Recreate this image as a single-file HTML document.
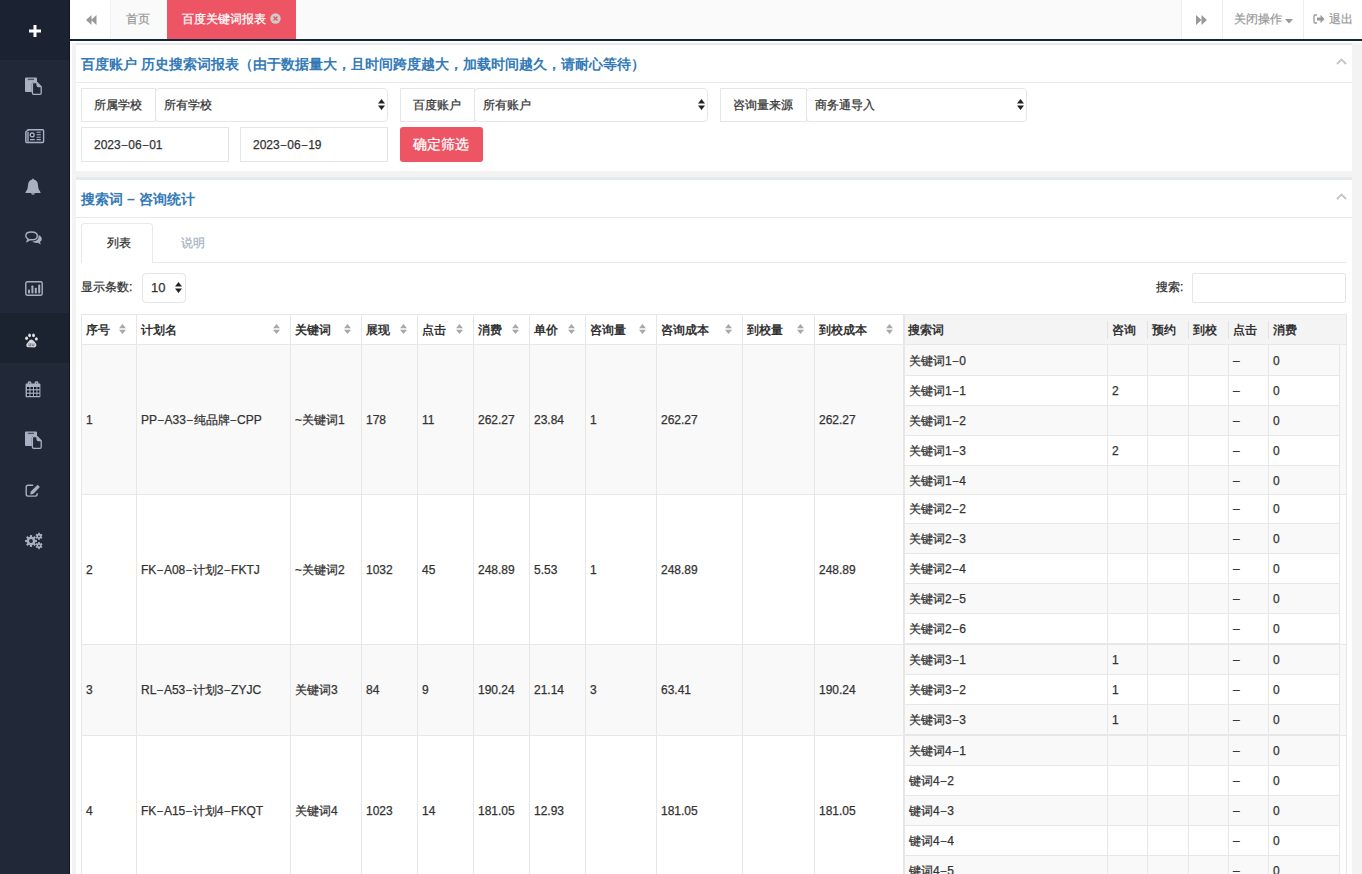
<!DOCTYPE html><html><head><meta charset="utf-8"><style>
*{box-sizing:border-box;margin:0;padding:0}
html,body{width:1362px;height:874px;overflow:hidden;background:#f3f3f4;font-family:"Liberation Sans",sans-serif;font-size:12px;color:#333}
.t{-webkit-text-stroke:0.25px currentColor}
.A{position:absolute}
.t{position:absolute;white-space:nowrap;line-height:14px}
#side{position:absolute;left:0;top:0;width:70px;height:874px;background:#212938;border-right:1px solid #101727}
#logo{position:absolute;left:0;top:0;width:69px;height:60px;background:#1b2231}
.ico{position:absolute;left:25px;fill:#a7b1c2}
#top{position:absolute;left:70px;top:0;width:1292px;height:41px;background:#fafafa;border-bottom:2px solid #132639}
.panel{position:absolute;left:76px;width:1276px;background:#fff}
.band{position:absolute;left:0;top:0;width:1276px;height:2px;background:#e7eaec}
.ptitle{position:absolute;left:5px;font-size:14px;font-weight:bold;color:#337ab7;white-space:nowrap;line-height:16px}
.hl{position:absolute;height:1px;background:#e7eaec}
.vl{position:absolute;width:1px;background:#e7e7e7}
.box{position:absolute;border:1px solid #e5e6e7;background:#fff}
.sel{border-radius:4px}
</style></head><body>
<div id="side"><div id="logo"></div>
<svg class="A" style="left:29px;top:25px" width="12" height="12" viewBox="0 0 12 12"><path d="M4.5 0h3v4.5H12v3H7.5V12h-3V7.5H0v-3h4.5z" fill="#fff"/></svg>
<svg class="ico" style="top:77px" width="18" height="18" viewBox="0 0 18 18"><path d="M0 1.6Q0 0.5 1.1 0.5h9.8Q12 0.5 12 1.6V5H8.5Q6.8 5 6.8 6.7V15H1.1Q0 15 0 13.9z" fill="#a7b1c2"/><rect x="2.8" y="1.7" width="6.2" height="1.4" fill="#4c5668"/><path d="M7.4 6.9Q7.4 5.7 8.6 5.7h3.6l4 4v6.4q0 1.2-1.2 1.2H8.6q-1.2 0-1.2-1.2z" fill="#212938" stroke="#a7b1c2" stroke-width="1.3"/><path d="M12 5.7v2.4q0 1.6 1.6 1.6h2.6" fill="#a7b1c2" stroke="#a7b1c2" stroke-width="1.2"/></svg>
<svg class="ico" style="top:129px" width="20" height="15" viewBox="0 0 20 15"><path d="M3 0.8H17.6Q18.6 0.8 18.6 1.8V12.4Q18.6 13.5 17.5 13.5H2Q0.8 13.5 0.8 12.3V3.2Q0.8 2.4 1.6 2.1L3 1.6z" fill="none" stroke="#a7b1c2" stroke-width="1.4"/><rect x="1.4" y="3" width="2.6" height="9.8" fill="#7d8699"/><circle cx="7.2" cy="5.9" r="1.9" fill="#10161f" stroke="#a7b1c2" stroke-width="1.4"/><path d="M11.6 3.2h4.2M11.6 5.8h4.2M11.6 8.3h4.2M5 10.6h4.8M11.6 10.6h4.2" stroke="#a7b1c2" stroke-width="1.1"/></svg>
<svg class="ico" style="top:178px" width="16" height="17" viewBox="0 0 16 17"><path d="M8 0.5q0.8 0 0.8 0.9Q13 2.3 13 7.5q0 4.5 2.5 6.8v0.7H0.5v-0.7Q3 12 3 7.5 3 2.3 7.2 1.4 7.2 0.5 8 0.5z" fill="#a7b1c2"/><path d="M6 15.3q0.5 1.5 2 1.5t2-1.5z" fill="#a7b1c2"/></svg>
<svg class="ico" style="top:231px" width="18" height="15" viewBox="0 0 18 15"><path d="M13.6 4.2Q16.8 5.2 16.8 8q0 1.9-1.9 3l1 2.5-3.2-1.7q-0.6 0.1-1.3 0.1-2.6 0-4.3-1.3 5.4-0.4 6.3-3.6 0.4-1.4 0-2.8z" fill="#a7b1c2"/><path d="M6.5 1Q0.8 1 0.8 4.7q0 2.1 2.1 3.2L2.2 10.2 5 8.6Q5.7 8.8 6.5 8.8q5.8 0 5.8-3.9T6.5 1z" fill="none" stroke="#a7b1c2" stroke-width="1.4"/></svg>
<svg class="ico" style="top:281px" width="18" height="15" viewBox="0 0 18 15"><rect x="0.8" y="0.8" width="16.4" height="13.4" rx="1.4" fill="none" stroke="#a7b1c2" stroke-width="1.4"/><rect x="3" y="8.5" width="2" height="4" rx="0.8" fill="#a7b1c2"/><rect x="6.4" y="4.5" width="2" height="8" rx="0.8" fill="#a7b1c2"/><rect x="9.8" y="6.8" width="2" height="5.7" rx="0.8" fill="#a7b1c2"/><rect x="13.2" y="3.4" width="2" height="9.1" rx="0.8" fill="#a7b1c2"/></svg>
<div class="A" style="left:0;top:313px;width:69px;height:50px;background:#1b2230"></div>
<svg class="A" style="left:25px;top:333px" width="13" height="15" viewBox="0 0 13 15"><ellipse cx="1.6" cy="5.3" rx="1.5" ry="1.7" fill="#e3e3e3"/><ellipse cx="4.6" cy="2.4" rx="1.4" ry="1.8" fill="#e3e3e3"/><ellipse cx="8.5" cy="2.4" rx="1.4" ry="1.8" fill="#e3e3e3"/><ellipse cx="11.3" cy="5.9" rx="1.5" ry="1.7" fill="#e3e3e3"/><path d="M6.2 6.5Q4.8 6.5 3.5 8.5 1.2 10.8 1.3 12.4 1.5 14.2 3.6 14.3 5 14.2 6.4 14.2t2.7 0.2q2.2 0 2.3-1.8 0.1-1.8-2-4Q7.6 6.5 6.2 6.5z" fill="#d9d9d9"/><path d="M4 10.2v2.7h1.7v-2.7M7.2 10.5v1.6q0 0.9 0.9 0.9t0.9-0.9v-1.6" fill="none" stroke="#55657a" stroke-width="0.8"/></svg>
<svg class="ico" style="top:380px" width="16" height="18" viewBox="0 0 16 18"><path d="M1.4 3.4h13.2q0.8 0 0.8 0.8v12.2q0 0.8-0.8 0.8H1.4q-0.8 0-0.8-0.8V4.2q0-0.8 0.8-0.8z" fill="#a7b1c2"/><path d="M2.7 4V2.6Q2.7 1.2 4.5 1.2t1.8 1.4V4zM9.7 4V2.6Q9.7 1.2 11.5 1.2t1.8 1.4V4z" fill="#a7b1c2"/><g fill="#10161f"><rect x="2" y="7" width="2.4" height="2.2"/><rect x="5.5" y="7" width="2.4" height="2.2"/><rect x="9" y="7" width="2.4" height="2.2"/><rect x="12.4" y="7" width="2" height="2.2"/><rect x="2" y="10.4" width="2.4" height="2.2"/><rect x="5.5" y="10.4" width="2.4" height="2.2"/><rect x="9" y="10.4" width="2.4" height="2.2"/><rect x="12.4" y="10.4" width="2" height="2.2"/><rect x="2" y="13.8" width="2.4" height="2.2"/><rect x="5.5" y="13.8" width="2.4" height="2.2"/><rect x="9" y="13.8" width="2.4" height="2.2"/><rect x="12.4" y="13.8" width="2" height="2.2"/></g><circle cx="4.5" cy="3.2" r="0.6" fill="#556"/><circle cx="11.5" cy="3.2" r="0.6" fill="#556"/></svg>
<svg class="ico" style="top:431px" width="18" height="18" viewBox="0 0 18 18"><path d="M0 1.6Q0 0.5 1.1 0.5h9.8Q12 0.5 12 1.6V5H8.5Q6.8 5 6.8 6.7V15H1.1Q0 15 0 13.9z" fill="#a7b1c2"/><rect x="2.8" y="1.7" width="6.2" height="1.4" fill="#4c5668"/><path d="M7.4 6.9Q7.4 5.7 8.6 5.7h3.6l4 4v6.4q0 1.2-1.2 1.2H8.6q-1.2 0-1.2-1.2z" fill="#212938" stroke="#a7b1c2" stroke-width="1.3"/><path d="M12 5.7v2.4q0 1.6 1.6 1.6h2.6" fill="#a7b1c2" stroke="#a7b1c2" stroke-width="1.2"/></svg>
<svg class="ico" style="top:484px" width="16" height="14" viewBox="0 0 16 14"><path d="M8.2 1.2H3Q1.2 1.2 1.2 3v7.3q0 1.8 1.8 1.8h7.3q1.8 0 1.8-1.8V9.2" fill="none" stroke="#a7b1c2" stroke-width="1.4"/><path d="M5.2 10.4L5.8 7.6 12.6 0.8 14.9 3.1 8.1 9.9z" fill="#a7b1c2"/></svg>
<svg class="ico" style="top:532px" width="19" height="18" viewBox="0 0 19 18"><circle cx="6.00" cy="9.00" r="4.30" fill="#a7b1c2"/><rect x="4.90" y="3.10" width="2.20" height="5.90" fill="#a7b1c2" transform="rotate(0.0 6.00 9.00)"/><rect x="4.90" y="3.10" width="2.20" height="5.90" fill="#a7b1c2" transform="rotate(45.0 6.00 9.00)"/><rect x="4.90" y="3.10" width="2.20" height="5.90" fill="#a7b1c2" transform="rotate(90.0 6.00 9.00)"/><rect x="4.90" y="3.10" width="2.20" height="5.90" fill="#a7b1c2" transform="rotate(135.0 6.00 9.00)"/><rect x="4.90" y="3.10" width="2.20" height="5.90" fill="#a7b1c2" transform="rotate(180.0 6.00 9.00)"/><rect x="4.90" y="3.10" width="2.20" height="5.90" fill="#a7b1c2" transform="rotate(225.0 6.00 9.00)"/><rect x="4.90" y="3.10" width="2.20" height="5.90" fill="#a7b1c2" transform="rotate(270.0 6.00 9.00)"/><rect x="4.90" y="3.10" width="2.20" height="5.90" fill="#a7b1c2" transform="rotate(315.0 6.00 9.00)"/><circle cx="6.00" cy="9.00" r="1.90" fill="#212938"/><circle cx="14.00" cy="4.30" r="2.50" fill="#a7b1c2"/><rect x="13.20" y="0.70" width="1.60" height="3.60" fill="#a7b1c2" transform="rotate(0.0 14.00 4.30)"/><rect x="13.20" y="0.70" width="1.60" height="3.60" fill="#a7b1c2" transform="rotate(60.0 14.00 4.30)"/><rect x="13.20" y="0.70" width="1.60" height="3.60" fill="#a7b1c2" transform="rotate(120.0 14.00 4.30)"/><rect x="13.20" y="0.70" width="1.60" height="3.60" fill="#a7b1c2" transform="rotate(180.0 14.00 4.30)"/><rect x="13.20" y="0.70" width="1.60" height="3.60" fill="#a7b1c2" transform="rotate(240.0 14.00 4.30)"/><rect x="13.20" y="0.70" width="1.60" height="3.60" fill="#a7b1c2" transform="rotate(300.0 14.00 4.30)"/><circle cx="14.00" cy="4.30" r="0.90" fill="#212938"/><circle cx="14.00" cy="13.60" r="2.50" fill="#a7b1c2"/><rect x="13.20" y="10.00" width="1.60" height="3.60" fill="#a7b1c2" transform="rotate(0.0 14.00 13.60)"/><rect x="13.20" y="10.00" width="1.60" height="3.60" fill="#a7b1c2" transform="rotate(60.0 14.00 13.60)"/><rect x="13.20" y="10.00" width="1.60" height="3.60" fill="#a7b1c2" transform="rotate(120.0 14.00 13.60)"/><rect x="13.20" y="10.00" width="1.60" height="3.60" fill="#a7b1c2" transform="rotate(180.0 14.00 13.60)"/><rect x="13.20" y="10.00" width="1.60" height="3.60" fill="#a7b1c2" transform="rotate(240.0 14.00 13.60)"/><rect x="13.20" y="10.00" width="1.60" height="3.60" fill="#a7b1c2" transform="rotate(300.0 14.00 13.60)"/><circle cx="14.00" cy="13.60" r="0.90" fill="#212938"/></svg>
</div>
<div id="top">
<div class="A" style="left:0;top:0;width:40px;height:39px;background:#fff"></div>
<svg class="A" style="left:16px;top:15px" width="11" height="10" viewBox="0 0 11 10"><path d="M0 5L5.5 0v10zM5 5L10.5 0v10z" fill="#999"/></svg>
<div class="A" style="left:40px;top:0;width:57px;height:38px;background:#fafafa;border-left:1px solid #f0f0f0"></div>
<div class="t" style="left:56px;top:12px;color:#999">首页</div>
<div class="A" style="left:97px;top:0;width:129px;height:39px;background:#ed5565"></div>
<div class="t" style="left:112px;top:12px;color:#fff">百度关键词报表</div>
<svg class="A" style="left:200px;top:13px" width="11" height="11" viewBox="0 0 11 11"><circle cx="5.5" cy="5.5" r="5.2" fill="#ccc"/><path d="M3.5 3.5l4 4M7.5 3.5l-4 4" stroke="#ed5565" stroke-width="1.4"/></svg>
<div class="A" style="left:1111px;top:0;width:181px;height:39px;background:#fff"></div>
<div class="A" style="left:1111px;top:0;width:1px;height:39px;background:#eee"></div>
<div class="A" style="left:1152px;top:0;width:1px;height:39px;background:#eee"></div>
<div class="A" style="left:1233px;top:0;width:1px;height:39px;background:#eee"></div>
<svg class="A" style="left:1126px;top:15px" width="11" height="10" viewBox="0 0 11 10"><path d="M0 0L5.5 5 0 10zM5.5 0L11 5 5.5 10z" fill="#999"/></svg>
<div class="t" style="left:1164px;top:12px;color:#999">关闭操作</div>
<svg class="A" style="left:1215px;top:19px" width="8" height="5" viewBox="0 0 8 5"><path d="M0 0h8L4 4.5z" fill="#999"/></svg>
<svg class="A" style="left:1243px;top:14px" width="12" height="10" viewBox="0 0 12 10"><path d="M4 1H2Q1 1 1 2v6q0 1 1 1h2" fill="none" stroke="#999" stroke-width="1.3"/><path d="M4 3.5h3.5V0.8L11.5 5 7.5 9.2V6.5H4z" fill="#999"/></svg>
<div class="t" style="left:1259px;top:12px;color:#999">退出</div>
</div>
<div class="A" style="left:70px;top:41px;width:1292px;height:2px;background:#fff"></div>
<div class="A" style="left:70px;top:41px;width:2px;height:833px;background:#fff"></div>
<div class="panel" style="top:43px;height:128px"><div class="band"></div>
<div class="ptitle" style="top:13px">百度账户 历史搜索词报表（由于数据量大，且时间跨度越大，加载时间越久，请耐心等待）</div>
<svg class="A" style="left:1260px;top:15px" width="11" height="7" viewBox="0 0 11 7"><path d="M1 6L5.5 1.5 10 6" fill="none" stroke="#c4c4c4" stroke-width="1.8"/></svg>
<div class="hl" style="left:0;top:39px;width:1276px"></div>
<div class="box " style="left:5px;top:45px;width:75px;height:34px;"></div>
<div class="box sel" style="left:79px;top:45px;width:233px;height:34px;"></div>
<div class="t" style="left:5px;top:55px;width:74px;text-align:center">所属学校</div>
<div class="t" style="left:88px;top:55px;">所有学校</div>
<svg class="A" style="left:302px;top:56px" width="7" height="11" viewBox="0 0 7 11"><path d="M0 4.5L3.5 0 7 4.5zM0 6.5h7L3.5 11z" fill="#222"/></svg>
<div class="box " style="left:324px;top:45px;width:75px;height:34px;"></div>
<div class="box sel" style="left:398px;top:45px;width:234px;height:34px;"></div>
<div class="t" style="left:324px;top:55px;width:74px;text-align:center">百度账户</div>
<div class="t" style="left:407px;top:55px;">所有账户</div>
<svg class="A" style="left:622px;top:56px" width="7" height="11" viewBox="0 0 7 11"><path d="M0 4.5L3.5 0 7 4.5zM0 6.5h7L3.5 11z" fill="#222"/></svg>
<div class="box " style="left:644px;top:45px;width:87px;height:34px;"></div>
<div class="box sel" style="left:730px;top:45px;width:221px;height:34px;"></div>
<div class="t" style="left:644px;top:55px;width:86px;text-align:center">咨询量来源</div>
<div class="t" style="left:739px;top:55px;">商务通导入</div>
<svg class="A" style="left:941px;top:56px" width="7" height="11" viewBox="0 0 7 11"><path d="M0 4.5L3.5 0 7 4.5zM0 6.5h7L3.5 11z" fill="#222"/></svg>
<div class="box " style="left:5px;top:84px;width:148px;height:35px;"></div>
<div class="box " style="left:164px;top:84px;width:148px;height:35px;"></div>
<div class="t" style="left:18px;top:95px;"><span style="font-size:12px">2023<span style="font-size:10px;margin:0 1px;position:relative;top:-1px">–</span>06<span style="font-size:10px;margin:0 1px;position:relative;top:-1px">–</span>01</span></div>
<div class="t" style="left:177px;top:95px;"><span style="font-size:12px">2023<span style="font-size:10px;margin:0 1px;position:relative;top:-1px">–</span>06<span style="font-size:10px;margin:0 1px;position:relative;top:-1px">–</span>19</span></div>
<div class="A" style="left:324px;top:84px;width:83px;height:35px;background:#ed5565;border-radius:3px"></div>
<div class="t" style="left:337px;top:93px;font-size:14px;color:#fff;line-height:16px">确定筛选</div>
</div>
<div class="panel" style="top:178px;height:700px"><div class="band" style="top:-1px;height:3px"></div>
<div class="ptitle" style="top:13px">搜索词 – 咨询统计</div>
<svg class="A" style="left:1260px;top:15px" width="11" height="7" viewBox="0 0 11 7"><path d="M1 6L5.5 1.5 10 6" fill="none" stroke="#c4c4c4" stroke-width="1.8"/></svg>
<div class="hl" style="left:0;top:39px;width:1276px"></div>
<div class="A" style="left:5px;top:84px;width:1265px;height:1px;background:#e7eaec"></div>
<div class="A" style="left:5px;top:45px;width:72px;height:40px;background:#fff;border:1px solid #e7eaec;border-bottom:0;border-radius:4px 4px 0 0"></div>
<div class="t" style="left:31px;top:58px;">列表</div>
<div class="t" style="left:105px;top:58px;color:#a7b1c2">说明</div>
<div class="t" style="left:5px;top:102px;">显示条数:</div>
<div class="box sel" style="left:66px;top:95px;width:44px;height:30px;"></div>
<div class="t" style="left:75px;top:103px;font-size:13px">10</div>
<svg class="A" style="left:99px;top:104px" width="7" height="11" viewBox="0 0 7 11"><path d="M0 4.5L3.5 0 7 4.5zM0 6.5h7L3.5 11z" fill="#222"/></svg>
<div class="t" style="left:1080px;top:102px;">搜索:</div>
<div class="box " style="left:1116px;top:95px;width:154px;height:30px;border-radius:2px"></div>
<div class="A" style="left:5px;top:167px;width:1265px;height:149px;background:#f9f9f9"></div>
<div class="A" style="left:5px;top:316px;width:1265px;height:150px;background:#fff"></div>
<div class="A" style="left:5px;top:466px;width:1265px;height:91px;background:#f9f9f9"></div>
<div class="A" style="left:5px;top:557px;width:1265px;height:150px;background:#fff"></div>
<div class="A" style="left:827px;top:136px;width:443px;height:31px;background:#f4f4f4"></div>
<div class="A" style="left:5px;top:136px;width:1266px;height:1px;background:#e7e7e7"></div>
<div class="A" style="left:5px;top:166px;width:1266px;height:1px;background:#e7e7e7"></div>
<div class="A" style="left:5px;top:136px;width:1px;height:560px;background:#e7e7e7"></div>
<div class="A" style="left:60px;top:136px;width:1px;height:560px;background:#e7e7e7"></div>
<div class="A" style="left:214px;top:136px;width:1px;height:560px;background:#e7e7e7"></div>
<div class="A" style="left:285px;top:136px;width:1px;height:560px;background:#e7e7e7"></div>
<div class="A" style="left:341px;top:136px;width:1px;height:560px;background:#e7e7e7"></div>
<div class="A" style="left:397px;top:136px;width:1px;height:560px;background:#e7e7e7"></div>
<div class="A" style="left:453px;top:136px;width:1px;height:560px;background:#e7e7e7"></div>
<div class="A" style="left:509px;top:136px;width:1px;height:560px;background:#e7e7e7"></div>
<div class="A" style="left:580px;top:136px;width:1px;height:560px;background:#e7e7e7"></div>
<div class="A" style="left:666px;top:136px;width:1px;height:560px;background:#e7e7e7"></div>
<div class="A" style="left:738px;top:136px;width:1px;height:560px;background:#e7e7e7"></div>
<div class="A" style="left:827px;top:136px;width:1px;height:560px;background:#e7e7e7"></div>
<div class="A" style="left:828px;top:136px;width:1px;height:560px;background:#e7e7e7"></div>
<div class="A" style="left:1270px;top:136px;width:1px;height:560px;background:#e7e7e7"></div>
<div class="t" style="left:10px;top:145px;font-weight:bold;-webkit-text-stroke:0">序号</div>
<svg class="A" style="left:43px;top:146px" width="7" height="10" viewBox="0 0 7 10"><path d="M0 4.2L3.5 0 7 4.2zM0 5.8h7L3.5 10z" fill="#a8a8a8"/></svg>
<div class="t" style="left:65px;top:145px;font-weight:bold;-webkit-text-stroke:0">计划名</div>
<svg class="A" style="left:197px;top:146px" width="7" height="10" viewBox="0 0 7 10"><path d="M0 4.2L3.5 0 7 4.2zM0 5.8h7L3.5 10z" fill="#a8a8a8"/></svg>
<div class="t" style="left:219px;top:145px;font-weight:bold;-webkit-text-stroke:0">关键词</div>
<svg class="A" style="left:268px;top:146px" width="7" height="10" viewBox="0 0 7 10"><path d="M0 4.2L3.5 0 7 4.2zM0 5.8h7L3.5 10z" fill="#a8a8a8"/></svg>
<div class="t" style="left:290px;top:145px;font-weight:bold;-webkit-text-stroke:0">展现</div>
<svg class="A" style="left:324px;top:146px" width="7" height="10" viewBox="0 0 7 10"><path d="M0 4.2L3.5 0 7 4.2zM0 5.8h7L3.5 10z" fill="#a8a8a8"/></svg>
<div class="t" style="left:346px;top:145px;font-weight:bold;-webkit-text-stroke:0">点击</div>
<svg class="A" style="left:380px;top:146px" width="7" height="10" viewBox="0 0 7 10"><path d="M0 4.2L3.5 0 7 4.2zM0 5.8h7L3.5 10z" fill="#a8a8a8"/></svg>
<div class="t" style="left:402px;top:145px;font-weight:bold;-webkit-text-stroke:0">消费</div>
<svg class="A" style="left:436px;top:146px" width="7" height="10" viewBox="0 0 7 10"><path d="M0 4.2L3.5 0 7 4.2zM0 5.8h7L3.5 10z" fill="#a8a8a8"/></svg>
<div class="t" style="left:458px;top:145px;font-weight:bold;-webkit-text-stroke:0">单价</div>
<svg class="A" style="left:492px;top:146px" width="7" height="10" viewBox="0 0 7 10"><path d="M0 4.2L3.5 0 7 4.2zM0 5.8h7L3.5 10z" fill="#a8a8a8"/></svg>
<div class="t" style="left:514px;top:145px;font-weight:bold;-webkit-text-stroke:0">咨询量</div>
<svg class="A" style="left:563px;top:146px" width="7" height="10" viewBox="0 0 7 10"><path d="M0 4.2L3.5 0 7 4.2zM0 5.8h7L3.5 10z" fill="#a8a8a8"/></svg>
<div class="t" style="left:585px;top:145px;font-weight:bold;-webkit-text-stroke:0">咨询成本</div>
<svg class="A" style="left:649px;top:146px" width="7" height="10" viewBox="0 0 7 10"><path d="M0 4.2L3.5 0 7 4.2zM0 5.8h7L3.5 10z" fill="#a8a8a8"/></svg>
<div class="t" style="left:671px;top:145px;font-weight:bold;-webkit-text-stroke:0">到校量</div>
<svg class="A" style="left:721px;top:146px" width="7" height="10" viewBox="0 0 7 10"><path d="M0 4.2L3.5 0 7 4.2zM0 5.8h7L3.5 10z" fill="#a8a8a8"/></svg>
<div class="t" style="left:743px;top:145px;font-weight:bold;-webkit-text-stroke:0">到校成本</div>
<svg class="A" style="left:810px;top:146px" width="7" height="10" viewBox="0 0 7 10"><path d="M0 4.2L3.5 0 7 4.2zM0 5.8h7L3.5 10z" fill="#a8a8a8"/></svg>
<div class="t" style="left:832px;top:145px;font-weight:bold;-webkit-text-stroke:0">搜索词</div>
<div class="t" style="left:1036px;top:145px;font-weight:bold;-webkit-text-stroke:0">咨询</div>
<div class="t" style="left:1076px;top:145px;font-weight:bold;-webkit-text-stroke:0">预约</div>
<div class="t" style="left:1117px;top:145px;font-weight:bold;-webkit-text-stroke:0">到校</div>
<div class="t" style="left:1157px;top:145px;font-weight:bold;-webkit-text-stroke:0">点击</div>
<div class="t" style="left:1197px;top:145px;font-weight:bold;-webkit-text-stroke:0">消费</div>
<div class="A" style="left:1031px;top:143px;width:1px;height:18px;background:#e2e2e2"></div>
<div class="A" style="left:1071px;top:143px;width:1px;height:18px;background:#e2e2e2"></div>
<div class="A" style="left:1112px;top:143px;width:1px;height:18px;background:#e2e2e2"></div>
<div class="A" style="left:1152px;top:143px;width:1px;height:18px;background:#e2e2e2"></div>
<div class="A" style="left:1192px;top:143px;width:1px;height:18px;background:#e2e2e2"></div>
<div class="t" style="left:10px;top:235px;"><span style="font-size:12px">1</span></div>
<div class="t" style="left:65px;top:235px;"><span style="font-size:12px">PP<span style="font-size:10px;margin:0 1px;position:relative;top:-1px">–</span>A33<span style="font-size:10px;margin:0 1px;position:relative;top:-1px">–</span></span><span style="font-size:12px">纯品牌</span><span style="font-size:12px"><span style="font-size:10px;margin:0 1px;position:relative;top:-1px">–</span>CPP</span></div>
<div class="t" style="left:219px;top:235px;"><span style="font-size:12px">~</span><span style="font-size:12px">关键词</span><span style="font-size:12px">1</span></div>
<div class="t" style="left:290px;top:235px;"><span style="font-size:12px">178</span></div>
<div class="t" style="left:346px;top:235px;"><span style="font-size:12px">11</span></div>
<div class="t" style="left:402px;top:235px;"><span style="font-size:12px">262.27</span></div>
<div class="t" style="left:458px;top:235px;"><span style="font-size:12px">23.84</span></div>
<div class="t" style="left:514px;top:235px;"><span style="font-size:12px">1</span></div>
<div class="t" style="left:585px;top:235px;"><span style="font-size:12px">262.27</span></div>
<div class="t" style="left:743px;top:235px;"><span style="font-size:12px">262.27</span></div>
<div class="t" style="left:10px;top:385px;"><span style="font-size:12px">2</span></div>
<div class="t" style="left:65px;top:385px;"><span style="font-size:12px">FK<span style="font-size:10px;margin:0 1px;position:relative;top:-1px">–</span>A08<span style="font-size:10px;margin:0 1px;position:relative;top:-1px">–</span></span><span style="font-size:12px">计划</span><span style="font-size:12px">2<span style="font-size:10px;margin:0 1px;position:relative;top:-1px">–</span>FKTJ</span></div>
<div class="t" style="left:219px;top:385px;"><span style="font-size:12px">~</span><span style="font-size:12px">关键词</span><span style="font-size:12px">2</span></div>
<div class="t" style="left:290px;top:385px;"><span style="font-size:12px">1032</span></div>
<div class="t" style="left:346px;top:385px;"><span style="font-size:12px">45</span></div>
<div class="t" style="left:402px;top:385px;"><span style="font-size:12px">248.89</span></div>
<div class="t" style="left:458px;top:385px;"><span style="font-size:12px">5.53</span></div>
<div class="t" style="left:514px;top:385px;"><span style="font-size:12px">1</span></div>
<div class="t" style="left:585px;top:385px;"><span style="font-size:12px">248.89</span></div>
<div class="t" style="left:743px;top:385px;"><span style="font-size:12px">248.89</span></div>
<div class="t" style="left:10px;top:505px;"><span style="font-size:12px">3</span></div>
<div class="t" style="left:65px;top:505px;"><span style="font-size:12px">RL<span style="font-size:10px;margin:0 1px;position:relative;top:-1px">–</span>A53<span style="font-size:10px;margin:0 1px;position:relative;top:-1px">–</span></span><span style="font-size:12px">计划</span><span style="font-size:12px">3<span style="font-size:10px;margin:0 1px;position:relative;top:-1px">–</span>ZYJC</span></div>
<div class="t" style="left:219px;top:505px;"><span style="font-size:12px">关键词</span><span style="font-size:12px">3</span></div>
<div class="t" style="left:290px;top:505px;"><span style="font-size:12px">84</span></div>
<div class="t" style="left:346px;top:505px;"><span style="font-size:12px">9</span></div>
<div class="t" style="left:402px;top:505px;"><span style="font-size:12px">190.24</span></div>
<div class="t" style="left:458px;top:505px;"><span style="font-size:12px">21.14</span></div>
<div class="t" style="left:514px;top:505px;"><span style="font-size:12px">3</span></div>
<div class="t" style="left:585px;top:505px;"><span style="font-size:12px">63.41</span></div>
<div class="t" style="left:743px;top:505px;"><span style="font-size:12px">190.24</span></div>
<div class="t" style="left:10px;top:626px;"><span style="font-size:12px">4</span></div>
<div class="t" style="left:65px;top:626px;"><span style="font-size:12px">FK<span style="font-size:10px;margin:0 1px;position:relative;top:-1px">–</span>A15<span style="font-size:10px;margin:0 1px;position:relative;top:-1px">–</span></span><span style="font-size:12px">计划</span><span style="font-size:12px">4<span style="font-size:10px;margin:0 1px;position:relative;top:-1px">–</span>FKQT</span></div>
<div class="t" style="left:219px;top:626px;"><span style="font-size:12px">关键词</span><span style="font-size:12px">4</span></div>
<div class="t" style="left:290px;top:626px;"><span style="font-size:12px">1023</span></div>
<div class="t" style="left:346px;top:626px;"><span style="font-size:12px">14</span></div>
<div class="t" style="left:402px;top:626px;"><span style="font-size:12px">181.05</span></div>
<div class="t" style="left:458px;top:626px;"><span style="font-size:12px">12.93</span></div>
<div class="t" style="left:585px;top:626px;"><span style="font-size:12px">181.05</span></div>
<div class="t" style="left:743px;top:626px;"><span style="font-size:12px">181.05</span></div>
<div class="A" style="left:829px;top:167px;width:434px;height:30px;background:#f9f9f9"></div>
<div class="A" style="left:829px;top:197px;width:434px;height:30px;background:#fff"></div>
<div class="A" style="left:829px;top:227px;width:434px;height:30px;background:#f9f9f9"></div>
<div class="A" style="left:829px;top:257px;width:434px;height:30px;background:#fff"></div>
<div class="A" style="left:829px;top:287px;width:434px;height:29px;background:#f9f9f9"></div>
<div class="A" style="left:829px;top:197px;width:434px;height:1px;background:#e7e7e7"></div>
<div class="A" style="left:829px;top:227px;width:434px;height:1px;background:#e7e7e7"></div>
<div class="A" style="left:829px;top:257px;width:434px;height:1px;background:#e7e7e7"></div>
<div class="A" style="left:829px;top:287px;width:434px;height:1px;background:#e7e7e7"></div>
<div class="t" style="left:833px;top:176px;"><span style="font-size:12px">关键词</span><span style="font-size:12px">1<span style="font-size:10px;margin:0 1px;position:relative;top:-1px">–</span>0</span></div>
<div class="t" style="left:1157px;top:176px;">–</div>
<div class="t" style="left:1197px;top:176px;"><span style="font-size:12px">0</span></div>
<div class="t" style="left:833px;top:206px;"><span style="font-size:12px">关键词</span><span style="font-size:12px">1<span style="font-size:10px;margin:0 1px;position:relative;top:-1px">–</span>1</span></div>
<div class="t" style="left:1036px;top:206px;"><span style="font-size:12px">2</span></div>
<div class="t" style="left:1157px;top:206px;">–</div>
<div class="t" style="left:1197px;top:206px;"><span style="font-size:12px">0</span></div>
<div class="t" style="left:833px;top:236px;"><span style="font-size:12px">关键词</span><span style="font-size:12px">1<span style="font-size:10px;margin:0 1px;position:relative;top:-1px">–</span>2</span></div>
<div class="t" style="left:1157px;top:236px;">–</div>
<div class="t" style="left:1197px;top:236px;"><span style="font-size:12px">0</span></div>
<div class="t" style="left:833px;top:266px;"><span style="font-size:12px">关键词</span><span style="font-size:12px">1<span style="font-size:10px;margin:0 1px;position:relative;top:-1px">–</span>3</span></div>
<div class="t" style="left:1036px;top:266px;"><span style="font-size:12px">2</span></div>
<div class="t" style="left:1157px;top:266px;">–</div>
<div class="t" style="left:1197px;top:266px;"><span style="font-size:12px">0</span></div>
<div class="t" style="left:833px;top:296px;"><span style="font-size:12px">关键词</span><span style="font-size:12px">1<span style="font-size:10px;margin:0 1px;position:relative;top:-1px">–</span>4</span></div>
<div class="t" style="left:1157px;top:296px;">–</div>
<div class="t" style="left:1197px;top:296px;"><span style="font-size:12px">0</span></div>
<div class="A" style="left:1031px;top:167px;width:1px;height:149px;background:#e7e7e7"></div>
<div class="A" style="left:1071px;top:167px;width:1px;height:149px;background:#e7e7e7"></div>
<div class="A" style="left:1112px;top:167px;width:1px;height:149px;background:#e7e7e7"></div>
<div class="A" style="left:1152px;top:167px;width:1px;height:149px;background:#e7e7e7"></div>
<div class="A" style="left:1192px;top:167px;width:1px;height:149px;background:#e7e7e7"></div>
<div class="A" style="left:1263px;top:167px;width:1px;height:149px;background:#e7e7e7"></div>
<div class="A" style="left:829px;top:316px;width:434px;height:29px;background:#fff"></div>
<div class="A" style="left:829px;top:345px;width:434px;height:30px;background:#f9f9f9"></div>
<div class="A" style="left:829px;top:375px;width:434px;height:30px;background:#fff"></div>
<div class="A" style="left:829px;top:405px;width:434px;height:30px;background:#f9f9f9"></div>
<div class="A" style="left:829px;top:435px;width:434px;height:30px;background:#fff"></div>
<div class="A" style="left:829px;top:345px;width:434px;height:1px;background:#e7e7e7"></div>
<div class="A" style="left:829px;top:375px;width:434px;height:1px;background:#e7e7e7"></div>
<div class="A" style="left:829px;top:405px;width:434px;height:1px;background:#e7e7e7"></div>
<div class="A" style="left:829px;top:435px;width:434px;height:1px;background:#e7e7e7"></div>
<div class="A" style="left:829px;top:465px;width:434px;height:1px;background:#e7e7e7"></div>
<div class="t" style="left:833px;top:324px;"><span style="font-size:12px">关键词</span><span style="font-size:12px">2<span style="font-size:10px;margin:0 1px;position:relative;top:-1px">–</span>2</span></div>
<div class="t" style="left:1157px;top:324px;">–</div>
<div class="t" style="left:1197px;top:324px;"><span style="font-size:12px">0</span></div>
<div class="t" style="left:833px;top:354px;"><span style="font-size:12px">关键词</span><span style="font-size:12px">2<span style="font-size:10px;margin:0 1px;position:relative;top:-1px">–</span>3</span></div>
<div class="t" style="left:1157px;top:354px;">–</div>
<div class="t" style="left:1197px;top:354px;"><span style="font-size:12px">0</span></div>
<div class="t" style="left:833px;top:384px;"><span style="font-size:12px">关键词</span><span style="font-size:12px">2<span style="font-size:10px;margin:0 1px;position:relative;top:-1px">–</span>4</span></div>
<div class="t" style="left:1157px;top:384px;">–</div>
<div class="t" style="left:1197px;top:384px;"><span style="font-size:12px">0</span></div>
<div class="t" style="left:833px;top:414px;"><span style="font-size:12px">关键词</span><span style="font-size:12px">2<span style="font-size:10px;margin:0 1px;position:relative;top:-1px">–</span>5</span></div>
<div class="t" style="left:1157px;top:414px;">–</div>
<div class="t" style="left:1197px;top:414px;"><span style="font-size:12px">0</span></div>
<div class="t" style="left:833px;top:444px;"><span style="font-size:12px">关键词</span><span style="font-size:12px">2<span style="font-size:10px;margin:0 1px;position:relative;top:-1px">–</span>6</span></div>
<div class="t" style="left:1157px;top:444px;">–</div>
<div class="t" style="left:1197px;top:444px;"><span style="font-size:12px">0</span></div>
<div class="A" style="left:1031px;top:316px;width:1px;height:150px;background:#e7e7e7"></div>
<div class="A" style="left:1071px;top:316px;width:1px;height:150px;background:#e7e7e7"></div>
<div class="A" style="left:1112px;top:316px;width:1px;height:150px;background:#e7e7e7"></div>
<div class="A" style="left:1152px;top:316px;width:1px;height:150px;background:#e7e7e7"></div>
<div class="A" style="left:1192px;top:316px;width:1px;height:150px;background:#e7e7e7"></div>
<div class="A" style="left:1263px;top:316px;width:1px;height:150px;background:#e7e7e7"></div>
<div class="A" style="left:829px;top:466px;width:434px;height:30px;background:#f9f9f9"></div>
<div class="A" style="left:829px;top:496px;width:434px;height:30px;background:#fff"></div>
<div class="A" style="left:829px;top:526px;width:434px;height:30px;background:#f9f9f9"></div>
<div class="A" style="left:829px;top:496px;width:434px;height:1px;background:#e7e7e7"></div>
<div class="A" style="left:829px;top:526px;width:434px;height:1px;background:#e7e7e7"></div>
<div class="A" style="left:829px;top:556px;width:434px;height:1px;background:#e7e7e7"></div>
<div class="t" style="left:833px;top:475px;"><span style="font-size:12px">关键词</span><span style="font-size:12px">3<span style="font-size:10px;margin:0 1px;position:relative;top:-1px">–</span>1</span></div>
<div class="t" style="left:1036px;top:475px;"><span style="font-size:12px">1</span></div>
<div class="t" style="left:1157px;top:475px;">–</div>
<div class="t" style="left:1197px;top:475px;"><span style="font-size:12px">0</span></div>
<div class="t" style="left:833px;top:505px;"><span style="font-size:12px">关键词</span><span style="font-size:12px">3<span style="font-size:10px;margin:0 1px;position:relative;top:-1px">–</span>2</span></div>
<div class="t" style="left:1036px;top:505px;"><span style="font-size:12px">1</span></div>
<div class="t" style="left:1157px;top:505px;">–</div>
<div class="t" style="left:1197px;top:505px;"><span style="font-size:12px">0</span></div>
<div class="t" style="left:833px;top:535px;"><span style="font-size:12px">关键词</span><span style="font-size:12px">3<span style="font-size:10px;margin:0 1px;position:relative;top:-1px">–</span>3</span></div>
<div class="t" style="left:1036px;top:535px;"><span style="font-size:12px">1</span></div>
<div class="t" style="left:1157px;top:535px;">–</div>
<div class="t" style="left:1197px;top:535px;"><span style="font-size:12px">0</span></div>
<div class="A" style="left:1031px;top:466px;width:1px;height:91px;background:#e7e7e7"></div>
<div class="A" style="left:1071px;top:466px;width:1px;height:91px;background:#e7e7e7"></div>
<div class="A" style="left:1112px;top:466px;width:1px;height:91px;background:#e7e7e7"></div>
<div class="A" style="left:1152px;top:466px;width:1px;height:91px;background:#e7e7e7"></div>
<div class="A" style="left:1192px;top:466px;width:1px;height:91px;background:#e7e7e7"></div>
<div class="A" style="left:1263px;top:466px;width:1px;height:91px;background:#e7e7e7"></div>
<div class="A" style="left:829px;top:557px;width:434px;height:30px;background:#f9f9f9"></div>
<div class="A" style="left:829px;top:587px;width:434px;height:30px;background:#fff"></div>
<div class="A" style="left:829px;top:617px;width:434px;height:30px;background:#f9f9f9"></div>
<div class="A" style="left:829px;top:647px;width:434px;height:30px;background:#fff"></div>
<div class="A" style="left:829px;top:677px;width:434px;height:30px;background:#f9f9f9"></div>
<div class="A" style="left:829px;top:587px;width:434px;height:1px;background:#e7e7e7"></div>
<div class="A" style="left:829px;top:617px;width:434px;height:1px;background:#e7e7e7"></div>
<div class="A" style="left:829px;top:647px;width:434px;height:1px;background:#e7e7e7"></div>
<div class="A" style="left:829px;top:677px;width:434px;height:1px;background:#e7e7e7"></div>
<div class="t" style="left:833px;top:566px;"><span style="font-size:12px">关键词</span><span style="font-size:12px">4<span style="font-size:10px;margin:0 1px;position:relative;top:-1px">–</span>1</span></div>
<div class="t" style="left:1157px;top:566px;">–</div>
<div class="t" style="left:1197px;top:566px;"><span style="font-size:12px">0</span></div>
<div class="t" style="left:833px;top:596px;"><span style="font-size:12px">键词</span><span style="font-size:12px">4<span style="font-size:10px;margin:0 1px;position:relative;top:-1px">–</span>2</span></div>
<div class="t" style="left:1157px;top:596px;">–</div>
<div class="t" style="left:1197px;top:596px;"><span style="font-size:12px">0</span></div>
<div class="t" style="left:833px;top:626px;"><span style="font-size:12px">键词</span><span style="font-size:12px">4<span style="font-size:10px;margin:0 1px;position:relative;top:-1px">–</span>3</span></div>
<div class="t" style="left:1157px;top:626px;">–</div>
<div class="t" style="left:1197px;top:626px;"><span style="font-size:12px">0</span></div>
<div class="t" style="left:833px;top:656px;"><span style="font-size:12px">键词</span><span style="font-size:12px">4<span style="font-size:10px;margin:0 1px;position:relative;top:-1px">–</span>4</span></div>
<div class="t" style="left:1157px;top:656px;">–</div>
<div class="t" style="left:1197px;top:656px;"><span style="font-size:12px">0</span></div>
<div class="t" style="left:833px;top:686px;"><span style="font-size:12px">键词</span><span style="font-size:12px">4<span style="font-size:10px;margin:0 1px;position:relative;top:-1px">–</span>5</span></div>
<div class="t" style="left:1157px;top:686px;">–</div>
<div class="t" style="left:1197px;top:686px;"><span style="font-size:12px">0</span></div>
<div class="A" style="left:1031px;top:557px;width:1px;height:150px;background:#e7e7e7"></div>
<div class="A" style="left:1071px;top:557px;width:1px;height:150px;background:#e7e7e7"></div>
<div class="A" style="left:1112px;top:557px;width:1px;height:150px;background:#e7e7e7"></div>
<div class="A" style="left:1152px;top:557px;width:1px;height:150px;background:#e7e7e7"></div>
<div class="A" style="left:1192px;top:557px;width:1px;height:150px;background:#e7e7e7"></div>
<div class="A" style="left:1263px;top:557px;width:1px;height:150px;background:#e7e7e7"></div>
<div class="A" style="left:5px;top:316px;width:1266px;height:1px;background:#e7e7e7"></div>
<div class="A" style="left:5px;top:466px;width:1266px;height:1px;background:#e7e7e7"></div>
<div class="A" style="left:5px;top:557px;width:1266px;height:1px;background:#e7e7e7"></div>
<div class="A" style="left:5px;top:707px;width:1266px;height:1px;background:#e7e7e7"></div>
</div>
</body></html>
